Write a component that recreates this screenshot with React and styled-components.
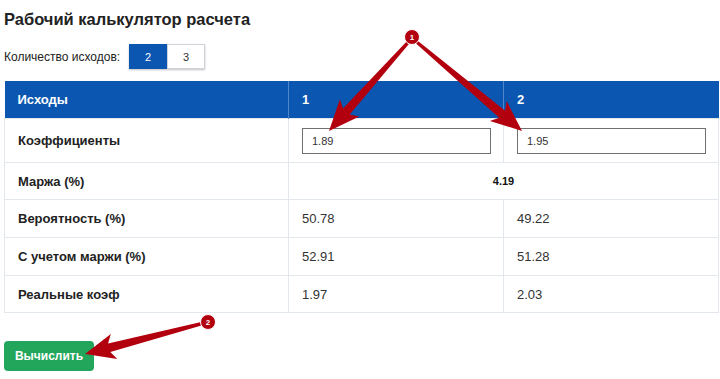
import React from "react";
import styled, { createGlobalStyle } from "styled-components";

const GlobalStyle = createGlobalStyle`
  html, body {
    margin: 0;
    padding: 0;
    background: #ffffff;
    font-family: "Liberation Sans", Arial, sans-serif;
    color: #222;
  }
`;

const rows = [
  { label: "Вероятность (%)", values: ["50.78", "49.22"] },
  { label: "С учетом маржи (%)", values: ["52.91", "51.28"] },
  { label: "Реальные коэф", values: ["1.97", "2.03"] },
];

// tapered arrow polygon from badge to tip
function arrowPoints(x0, y0, x1, y1, w0, w1, hl, hw) {
  const dx = x1 - x0;
  const dy = y1 - y0;
  const len = Math.hypot(dx, dy);
  const ux = dx / len;
  const uy = dy / len;
  const px = -uy;
  const py = ux;
  const bx = x1 - ux * hl;
  const by = y1 - uy * hl;
  const nx = bx - ux * 5;
  const ny = by - uy * 5;
  const pts = [
    [x0 + (px * w0) / 2, y0 + (py * w0) / 2],
    [bx + (px * w1) / 2, by + (py * w1) / 2],
    [nx + (px * hw) / 2, ny + (py * hw) / 2],
    [x1, y1],
    [nx - (px * hw) / 2, ny - (py * hw) / 2],
    [bx - (px * w1) / 2, by - (py * w1) / 2],
    [x0 - (px * w0) / 2, y0 - (py * w0) / 2],
  ];
  return pts.map((p) => p.map((v) => v.toFixed(1)).join(",")).join(" ");
}

function Badge({ x, y, n }) {
  return (
    <g>
      <circle cx={x} cy={y} r="7.5" fill="#b3000f" stroke="#fff" strokeWidth="1" />
      <text
        x={x}
        y={y + 3}
        textAnchor="middle"
        fontSize="8"
        fontWeight="bold"
        fill="#fff"
        fontFamily="Liberation Sans, Arial, sans-serif"
      >
        {n}
      </text>
    </g>
  );
}

function App() {
  return (
    <Page>
      <GlobalStyle />
      <Title>Рабочий калькулятор расчета</Title>
      <CountRow>
        <CountLabel>Количество исходов:</CountLabel>
        <Segments>
          <Segment active>2</Segment>
          <Segment>3</Segment>
        </Segments>
      </CountRow>
      <Table>
        <colgroup>
          <col style={{ width: 284 }} />
          <col style={{ width: 215 }} />
          <col style={{ width: 215 }} />
        </colgroup>
        <thead>
          <tr>
            <HeadCell>Исходы</HeadCell>
            <HeadCell>1</HeadCell>
            <HeadCell>2</HeadCell>
          </tr>
        </thead>
        <tbody>
          <Row height={44}>
            <LabelCell>Коэффициенты</LabelCell>
            <Cell>
              <OddInput defaultValue="1.89" />
            </Cell>
            <Cell>
              <OddInput defaultValue="1.95" />
            </Cell>
          </Row>
          <Row height={37}>
            <LabelCell>Маржа (%)</LabelCell>
            <MarginCell colSpan={2}>4.19</MarginCell>
          </Row>
          {rows.map((r, i) => (
            <Row key={r.label} height={i === 2 ? 37 : 38}>
              <LabelCell>{r.label}</LabelCell>
              <Cell>{r.values[0]}</Cell>
              <Cell>{r.values[1]}</Cell>
            </Row>
          ))}
        </tbody>
      </Table>
      <CalcButton>Вычислить</CalcButton>
      <Overlay viewBox="0 0 720 379" width="720" height="379">
        <polygon points={arrowPoints(412, 38, 329, 131, 3, 9, 26, 26)} fill="#b3000f" />
        <polygon points={arrowPoints(412, 38, 522, 131, 3, 9, 26, 26)} fill="#b3000f" />
        <polygon points={arrowPoints(208, 322, 85, 354, 3, 9, 25, 26)} fill="#b3000f" />
        <Badge x={412} y={37} n="1" />
        <Badge x={208} y={322} n="2" />
      </Overlay>
    </Page>
  );
}

export default App;

const Page = styled.div`
  position: relative;
  width: 720px;
  height: 379px;
  overflow: hidden;
  padding: 0 2px 0 4px;
  box-sizing: border-box;
  display: flex;
  flex-direction: column;
  align-items: flex-start;
`;

const Title = styled.h1`
  margin: 9px 0 0;
  font-size: 16.5px;
  line-height: 20px;
  font-weight: bold;
  color: #222;
`;

const CountRow = styled.div`
  display: flex;
  align-items: center;
  gap: 9px;
  margin-top: 15px;
  height: 25px;
`;

const CountLabel = styled.span`
  font-size: 12px;
  color: #222;
`;

const Segments = styled.div`
  display: flex;
  height: 25px;
  box-shadow: 0 1px 2px rgba(0, 0, 0, 0.25);
`;

const Segment = styled.button`
  width: 38px;
  height: 25px;
  padding: 0;
  border: 1px solid ${(p) => (p.active ? "#0a56b0" : "#cfd4da")};
  background: ${(p) => (p.active ? "#0a56b0" : "#fff")};
  color: ${(p) => (p.active ? "#fff" : "#333")};
  font-family: "Liberation Sans", Arial, sans-serif;
  font-size: 11px;
`;

const Table = styled.table`
  margin-top: 12px;
  width: 714px;
  table-layout: fixed;
  border-collapse: collapse;
  font-size: 13px;
`;

const HeadCell = styled.th`
  height: 37px;
  padding: 0 13px;
  text-align: left;
  background: #0a56b0;
  color: #fff;
  font-size: 13px;
  font-weight: bold;
  border-left: 1px solid #4f86c8;
  &:first-child {
    border-left: none;
  }
`;

const Row = styled.tr`
  height: ${(p) => p.height}px;
`;

const Cell = styled.td`
  padding: 0 13px;
  border: 1px solid #e3e8ee;
  color: #333;
  font-size: 13px;
`;

const LabelCell = styled(Cell)`
  font-weight: bold;
  color: #222;
`;

const MarginCell = styled(Cell)`
  text-align: center;
  font-weight: bold;
  font-size: 11px;
  color: #111;
`;

const OddInput = styled.input`
  display: block;
  box-sizing: border-box;
  width: 189px;
  height: 26px;
  border: 1px solid #707070;
  padding: 0 9px;
  font-family: "Liberation Sans", Arial, sans-serif;
  font-size: 11px;
  color: #333;
`;

const CalcButton = styled.button`
  margin-top: 28px;
  width: 90px;
  height: 30px;
  border: none;
  border-radius: 4px;
  background: #22a65c;
  color: #fff;
  font-family: "Liberation Sans", Arial, sans-serif;
  font-size: 12px;
  font-weight: bold;
`;

const Overlay = styled.svg`
  position: absolute;
  top: 0;
  left: 0;
  pointer-events: none;
`;
